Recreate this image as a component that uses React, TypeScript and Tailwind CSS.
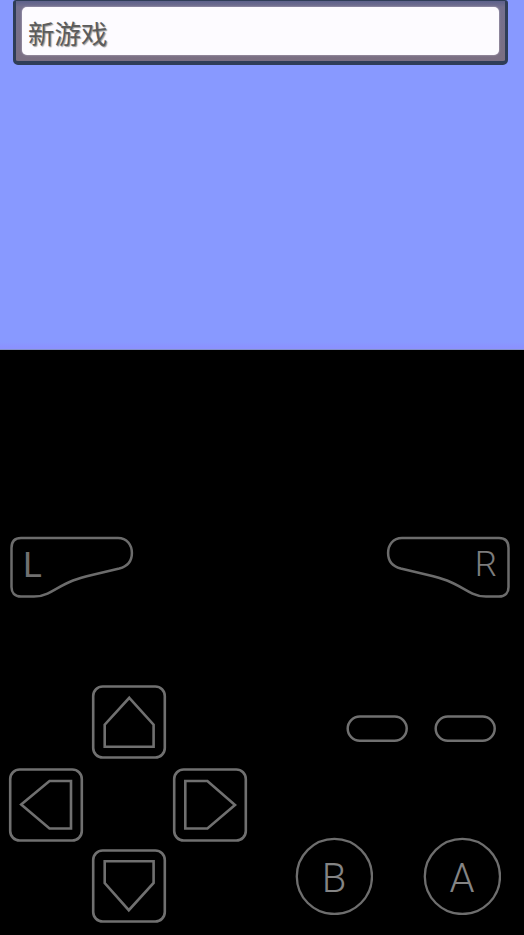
import type { ReactNode } from 'react'

const ARROWS = {
  up: '37.3,12.8 61.6,39.7 61.6,61.8 12.7,61.8 12.7,39.7',
  left: '12.2,36.5 40.5,13 62,13 62,60.5 40.5,60.5',
  right: '12.3,13 34.4,13 62,37 34.4,60.5 12.3,60.5',
  down: '12.7,12.2 61.6,12.2 61.6,34 36.8,61.2 12.7,34',
}

function PadButton({
  direction,
  className,
}: {
  direction: keyof typeof ARROWS
  className: string
}) {
  return (
    <button
      aria-label={direction}
      className={`flex items-start justify-start ${className}`}
    >
      <svg
        className="block h-[74px] w-[74px] shrink-0 overflow-visible"
        viewBox="0 0 74 74"
        fill="none"
        stroke="#707070"
        strokeWidth="2.6"
      >
        <rect x="1.2" y="1.5" width="71.6" height="71" rx="9.5" />
        <polygon points={ARROWS[direction]} />
      </svg>
    </button>
  )
}

function ShoulderButton({
  flipped,
  children,
}: {
  flipped?: boolean
  children: ReactNode
}) {
  return (
    <button className="relative h-[63px] w-[124px]">
      <svg
        className={flipped ? 'block -scale-x-100' : 'block'}
        width="124"
        height="63"
        viewBox="0 0 124 63"
        fill="none"
        stroke="#6c6c6c"
        strokeWidth="2.5"
      >
        <path d="M11 2 H108 C117 2 121.9 9 121.9 17 C121.9 25 117 30.5 109.3 32.5 L83 38.7 C76 40.4 69 42.2 63 44.5 C52 48.7 46 53.7 37.5 57.6 C33.5 59.5 29 60.5 24 60.5 H11 C4.5 60.5 1.5 56.5 1.5 51 V12 C1.5 6 4.5 2 11 2 Z" />
      </svg>
      {children}
    </button>
  )
}

function RoundButton({ children }: { children: ReactNode }) {
  return (
    <button className="relative flex size-[78px] items-center justify-center pt-[5px] font-['Roboto',sans-serif] text-[40px] leading-none font-light text-[#848484]">
      <svg
        className="absolute inset-0"
        width="78"
        height="78"
        viewBox="0 0 78 78"
        fill="none"
        stroke="#6e6e6e"
        strokeWidth="2.3"
      >
        <circle cx="39.4" cy="39.4" r="37.6" />
      </svg>
      {children}
    </button>
  )
}

function PillButton({ label }: { label: string }) {
  return (
    <button aria-label={label} className="h-[27px] w-[62px]">
      <svg
        className="block"
        width="62"
        height="27"
        viewBox="0 0 62 27"
        fill="none"
        stroke="#707070"
        strokeWidth="2.5"
      >
        <rect x="1.7" y="1.5" width="59" height="24.2" rx="12.1" />
      </svg>
    </button>
  )
}

function GameScreen() {
  return (
    <div className="h-[350px] border-b border-[#8490c8] bg-[linear-gradient(to_bottom,#8899ff_342px,#8b92ff_347px)] pl-[13px]">
      <div className="h-[65px] w-[495px] rounded-t-[3px] rounded-b-[5px] border-x-[3px] border-t border-b-4 border-[#2f3d57] bg-[linear-gradient(to_bottom,#5d618c,#74708f_6px,#7b6f82)] px-[6px] pt-[6px] pb-[7px]">
        <div className="h-[48px] w-full rounded-[5px] bg-[#fdfbff] pl-[6px] font-['Noto_Sans_CJK_SC',sans-serif] text-[26.5px] leading-[52px] text-[#5c5c5c] shadow-[0_0_2px_#c9c2d2] [text-shadow:1px_1px_1px_#999]">
          新游戏
        </div>
      </div>
    </div>
  )
}

export default function App() {
  return (
    <div className="flex h-[935px] w-[524px] flex-col overflow-hidden bg-black">
      <GameScreen />

      <div className="mt-[186px] flex justify-between pr-[14px] pl-[10px]">
        <ShoulderButton>
          <span className="absolute top-[12px] left-[13px] font-['Roboto',sans-serif] text-[35px] leading-[36px] text-[#707070]">
            L
          </span>
        </ShoulderButton>
        <ShoulderButton flipped>
          <span className="absolute top-[11px] right-[13px] font-['Roboto',sans-serif] text-[35px] leading-[36px] font-light text-[#7c7c7c]">
            R
          </span>
        </ShoulderButton>
      </div>

      <div className="mt-[86px] flex justify-between pr-[23px] pl-[9px]">
        <div className="grid grid-cols-[75px_73px_74px] grid-rows-[75px_73px_74px] gap-2">
          <PadButton direction="up" className="col-start-2" />
          <PadButton direction="left" className="col-start-1 row-start-2" />
          <PadButton direction="right" className="col-start-3 row-start-2" />
          <PadButton direction="down" className="col-start-2 row-start-3" />
        </div>

        <div className="flex w-[206px] flex-col pt-[30px]">
          <div className="flex justify-end gap-[26px] pr-[5px]">
            <PillButton label="select" />
            <PillButton label="start" />
          </div>
          <div className="mt-[95px] flex justify-between">
            <RoundButton>B</RoundButton>
            <RoundButton>A</RoundButton>
          </div>
        </div>
      </div>
    </div>
  )
}
